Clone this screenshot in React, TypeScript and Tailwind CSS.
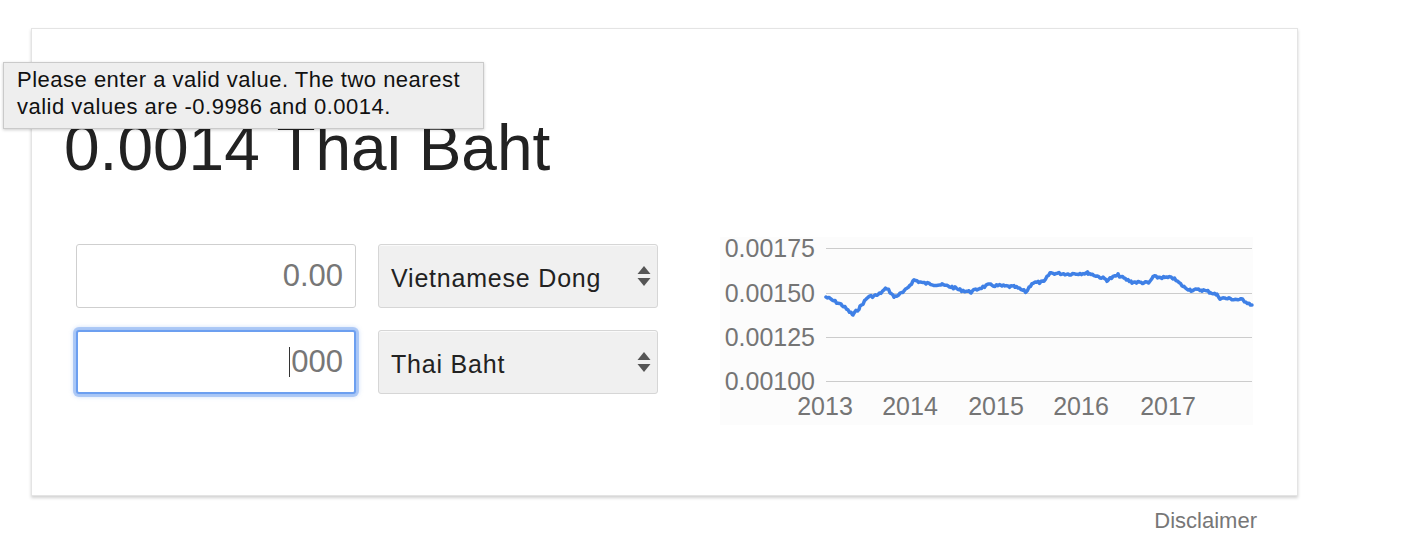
import { useMemo } from "react";

const KEY_POINTS: [number, number][] = [
  [106, 60], [112, 63], [122, 68], [133, 78], [140, 70], [148, 60], [158, 58],
  [167, 51], [174, 60], [184, 55], [194, 43], [203, 46], [212, 47], [222, 48],
  [232, 50], [240, 53], [251, 55], [260, 51], [269, 48], [282, 49], [295, 50],
  [306, 55], [312, 46], [324, 45], [330, 36], [348, 37], [368, 36], [380, 40],
  [387, 43], [398, 38], [405, 42], [412, 45], [429, 46], [433, 40], [453, 41],
  [464, 50], [471, 53], [482, 53], [490, 55], [497, 58], [500, 61], [512, 62],
  [523, 63], [532, 68],
];

function buildLine() {
  let seed = 7;
  const rand = () => {
    seed = (seed * 9301 + 49297) % 233280;
    return seed / 233280;
  };
  const pts: string[] = [];
  for (let i = 0; i < KEY_POINTS.length - 1; i++) {
    const [x0, y0] = KEY_POINTS[i];
    const [x1, y1] = KEY_POINTS[i + 1];
    for (let x = x0; x < x1; x += 1.5) {
      const t = (x - x0) / (x1 - x0);
      const y = y0 + (y1 - y0) * t + (rand() - 0.5) * 2.6;
      pts.push(`${x.toFixed(1)},${y.toFixed(1)}`);
    }
  }
  const last = KEY_POINTS[KEY_POINTS.length - 1];
  pts.push(`${last[0]},${last[1]}`);
  return "M" + pts.join(" L");
}

const Chart = () => {
  const d = useMemo(buildLine, []);
  const grid = [
    { y: 11, label: "0.00175" },
    { y: 56, label: "0.00150" },
    { y: 100, label: "0.00125" },
    { y: 144, label: "0.00100" },
  ];
  const years = [
    { x: 105, label: "2013" },
    { x: 190, label: "2014" },
    { x: 276, label: "2015" },
    { x: 361, label: "2016" },
    { x: 448, label: "2017" },
  ];
  return (
    <svg width="533" height="188" viewBox="0 0 533 188" overflow="visible" className="bg-[#fcfcfc] block">
      {grid.map((g) => (
        <g key={g.label}>
          <line x1="106" x2="532" y1={g.y + 0.5} y2={g.y + 0.5} stroke="#cccccc" strokeWidth="1" />
          <text
            x="95"
            y={g.y + 9}
            textAnchor="end"
            fill="#757575"
            fontSize="25"
            fontFamily="'Liberation Sans', Arial, sans-serif"
          >
            {g.label}
          </text>
        </g>
      ))}
      {years.map((yr) => (
        <text
          key={yr.label}
          x={yr.x}
          y="178"
          textAnchor="middle"
          fill="#757575"
          fontSize="25"
          fontFamily="'Liberation Sans', Arial, sans-serif"
        >
          {yr.label}
        </text>
      ))}
      <path d={d} fill="none" stroke="#3f80e6" strokeWidth="3.5" strokeLinejoin="round" strokeLinecap="round" />
    </svg>
  );
};

const SelectArrows = () => (
  <svg width="14" height="22" viewBox="0 0 14 22" className="shrink-0">
    <path d="M7 1 L13.5 9 L0.5 9 Z" fill="#555" />
    <path d="M7 21 L13.5 13 L0.5 13 Z" fill="#555" />
  </svg>
);

const CurrencySelect = ({ label }: { label: string }) => (
  <div className="w-[280px] h-[64px] rounded-[3px] border border-[#d6d6d6] bg-[#f0f0f0] flex items-center justify-between pl-[12px] pr-[6px] shadow-[inset_0_1px_0_#fafafa]">
    <span className="text-[25px] tracking-[0.8px] text-[#222] pt-[6px]">{label}</span>
    <SelectArrows />
  </div>
);

export default function App() {
  return (
    <div className="relative w-[1416px] h-[542px] bg-white font-['Liberation_Sans',Arial,sans-serif] overflow-hidden">
      <div className="pt-[28px] pl-[31px]">
        <div className="w-[1267px] h-[468px] bg-white border border-[#e4e4e4] shadow-[0_2px_3px_rgba(0,0,0,0.18)] pl-[32px] pt-[87px]">
          <div className="text-[64px] leading-[64px] text-[#222]">0.0014 Thai Baht</div>
          <div className="mt-[57px] flex items-start">
            <div className="ml-[12px] pt-[7px] flex flex-col gap-[22px]">
              <div className="flex gap-[22px]">
                <div className="w-[280px] h-[64px] rounded-[3px] border border-[#cfcfcf] bg-white flex items-center justify-end pr-[12px]">
                  <span className="text-[31px] text-[#777]">0.00</span>
                </div>
                <CurrencySelect label="Vietnamese Dong" />
              </div>
              <div className="flex gap-[22px]">
                <div className="w-[280px] h-[64px] rounded-[3px] border-2 border-[#6c9ff0] bg-white flex items-center justify-end pr-[11px] shadow-[0_0_0_3px_rgba(120,165,240,0.5),0_0_4px_3px_rgba(120,165,240,0.35)]">
                  <span className="w-px h-[30px] bg-[#333] mr-[1px]" />
                  <span className="text-[31px] text-[#777]">000</span>
                </div>
                <CurrencySelect label="Thai Baht" />
              </div>
            </div>
            <div className="ml-[62px]">
              <Chart />
            </div>
          </div>
        </div>
        <div className="w-[1267px] mt-[14px] pr-[41px] text-right text-[22px] leading-[22px] text-[#777]">
          Disclaimer
        </div>
      </div>
      <div className="absolute left-[3px] top-[62px] w-[481px] h-[67px] bg-[#eeeeee] border border-[#cacaca] shadow-[0_1px_3px_rgba(0,0,0,0.2)] pl-[13px] pt-[3px] text-[22px] leading-[27px] tracking-[0.5px] text-[#111]">
        <div>Please enter a valid value. The two nearest</div>
        <div>valid values are -0.9986 and 0.0014.</div>
      </div>
    </div>
  );
}
